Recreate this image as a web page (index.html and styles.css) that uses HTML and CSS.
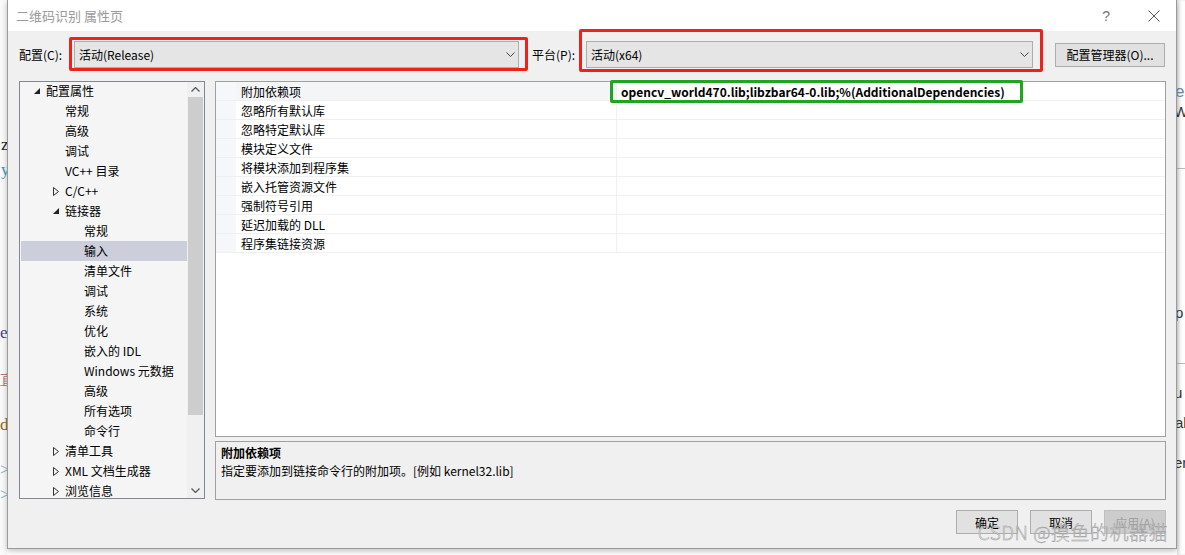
FILE: index.html
```html
<!DOCTYPE html>
<html>
<head>
    <meta charset="UTF-8">
    <link rel="stylesheet" href="styles.css">
</head>
<body>
<div class="screen">
    <div class="bg-left">
        <div class="bg-char c-z">z</div>
        <div class="bg-char c-y">y</div>
        <div class="bg-char c-e">e</div>
        <div class="bg-char c-zh">直</div>
        <div class="bg-char c-d">d</div>
        <div class="bg-char c-gt">&gt;</div>
        <div class="bg-char c-gt2">&gt;</div>
    </div>

    <div class="dialog">
        <div class="titlebar">
            <span class="title">二维码识别 属性页</span>
            <span class="help">?</span>
            <svg class="close" width="12" height="12" viewBox="0 0 12 12">
                <path d="M0.5 0.5 L11.5 11.5 M11.5 0.5 L0.5 11.5" stroke="#555" stroke-width="1" fill="none"/>
            </svg>
        </div>

        <div class="content">
            <div class="config-row">
                <label class="cfg-label">配置(C):</label>
                <div class="combo combo-config">
                    <span>活动(Release)</span>
                    <svg width="9" height="5" viewBox="0 0 9 5"><path d="M0.5 0.5 L4.5 4.5 L8.5 0.5" stroke="#444" fill="none"/></svg>
                    <div class="mark-red mark-config"></div>
                </div>
                <label class="cfg-label plat-label">平台(P):</label>
                <div class="combo combo-platform">
                    <span>活动(x64)</span>
                    <svg width="9" height="5" viewBox="0 0 9 5"><path d="M0.5 0.5 L4.5 4.5 L8.5 0.5" stroke="#444" fill="none"/></svg>
                    <div class="mark-red mark-platform"></div>
                </div>
                <button class="btn btn-manager">配置管理器(O)...</button>
            </div>

            <div class="main">
                <div class="tree">
                    <div class="tree-list">
                        <div class="node lvl0"><span class="tog"><svg width="6" height="6" viewBox="0 0 6 6"><polygon points="6,0 6,6 0,6" fill="#222"/></svg></span>配置属性</div>
                        <div class="node lvl1"><span class="tog"></span>常规</div>
                        <div class="node lvl1"><span class="tog"></span>高级</div>
                        <div class="node lvl1"><span class="tog"></span>调试</div>
                        <div class="node lvl1"><span class="tog"></span>VC++ 目录</div>
                        <div class="node lvl1"><span class="tog"><svg width="6" height="9" viewBox="0 0 6 9"><polygon points="0.5,0.5 5.5,4.5 0.5,8.5" fill="none" stroke="#333"/></svg></span>C/C++</div>
                        <div class="node lvl1"><span class="tog"><svg width="6" height="6" viewBox="0 0 6 6"><polygon points="6,0 6,6 0,6" fill="#222"/></svg></span>链接器</div>
                        <div class="node lvl2"><span class="tog"></span>常规</div>
                        <div class="node lvl2 selected"><span class="tog"></span>输入</div>
                        <div class="node lvl2"><span class="tog"></span>清单文件</div>
                        <div class="node lvl2"><span class="tog"></span>调试</div>
                        <div class="node lvl2"><span class="tog"></span>系统</div>
                        <div class="node lvl2"><span class="tog"></span>优化</div>
                        <div class="node lvl2"><span class="tog"></span>嵌入的 IDL</div>
                        <div class="node lvl2"><span class="tog"></span>Windows 元数据</div>
                        <div class="node lvl2"><span class="tog"></span>高级</div>
                        <div class="node lvl2"><span class="tog"></span>所有选项</div>
                        <div class="node lvl2"><span class="tog"></span>命令行</div>
                        <div class="node lvl1"><span class="tog"><svg width="6" height="9" viewBox="0 0 6 9"><polygon points="0.5,0.5 5.5,4.5 0.5,8.5" fill="none" stroke="#333"/></svg></span>清单工具</div>
                        <div class="node lvl1"><span class="tog"><svg width="6" height="9" viewBox="0 0 6 9"><polygon points="0.5,0.5 5.5,4.5 0.5,8.5" fill="none" stroke="#333"/></svg></span>XML 文档生成器</div>
                        <div class="node lvl1"><span class="tog"><svg width="6" height="9" viewBox="0 0 6 9"><polygon points="0.5,0.5 5.5,4.5 0.5,8.5" fill="none" stroke="#333"/></svg></span>浏览信息</div>
                    </div>
                    <div class="scrollbar">
                        <div class="sb-arrow">
                            <svg width="9" height="5" viewBox="0 0 9 5"><path d="M0.5 4.5 L4.5 0.5 L8.5 4.5" stroke="#555" stroke-width="1.2" fill="none"/></svg>
                        </div>
                        <div class="sb-thumb"></div>
                        <div class="sb-track"></div>
                        <div class="sb-arrow">
                            <svg width="9" height="5" viewBox="0 0 9 5"><path d="M0.5 0.5 L4.5 4.5 L8.5 0.5" stroke="#555" stroke-width="1.2" fill="none"/></svg>
                        </div>
                    </div>
                </div>

                <div class="right-pane">
                    <div class="grid">
                        <div class="row first">
                            <div class="gutter"></div>
                            <div class="name">附加依赖项</div>
                            <div class="value">
                                <span class="value-text">opencv_world470.lib;libzbar64-0.lib;%(AdditionalDependencies)</span>
                                <div class="mark-green"></div>
                            </div>
                        </div>
                        <div class="row"><div class="gutter"></div><div class="name">忽略所有默认库</div><div class="value"></div></div>
                        <div class="row"><div class="gutter"></div><div class="name">忽略特定默认库</div><div class="value"></div></div>
                        <div class="row"><div class="gutter"></div><div class="name">模块定义文件</div><div class="value"></div></div>
                        <div class="row"><div class="gutter"></div><div class="name">将模块添加到程序集</div><div class="value"></div></div>
                        <div class="row"><div class="gutter"></div><div class="name">嵌入托管资源文件</div><div class="value"></div></div>
                        <div class="row"><div class="gutter"></div><div class="name">强制符号引用</div><div class="value"></div></div>
                        <div class="row"><div class="gutter"></div><div class="name">延迟加载的 DLL</div><div class="value"></div></div>
                        <div class="row"><div class="gutter"></div><div class="name">程序集链接资源</div><div class="value"></div></div>
                    </div>
                    <div class="desc">
                        <div class="desc-title">附加依赖项</div>
                        <div class="desc-text">指定要添加到链接命令行的附加项。[例如 kernel32.lib]</div>
                    </div>
                </div>
            </div>

            <div class="buttons">
                <button class="btn btn-dlg">确定</button>
                <button class="btn btn-dlg">取消</button>
                <button class="btn btn-dlg disabled">应用(A)</button>
            </div>
        </div>

        <div class="watermark">CSDN @摸鱼的机器猫</div>
    </div>

    <div class="bg-right">
        <div class="bg-char r-e">e</div>
        <div class="bg-char r-w">W</div>
        <div class="r-line r-line1"></div>
        <div class="bg-char r-p">p</div>
        <div class="r-line r-line2"></div>
        <div class="bg-char r-u">u</div>
        <div class="bg-char r-al">al</div>
        <div class="bg-char r-er">er</div>
    </div>
</div>
</body>
</html>
```

FILE: styles.css
```css
html, body {
    margin: 0;
    padding: 0;
}

body {
    font-family: "Noto Sans CJK SC", "Noto Sans", sans-serif;
    font-size: 12px;
    color: #000;
    background: #fff;
}

.screen {
    display: flex;
    width: 1185px;
    height: 555px;
    overflow: hidden;
    background: #fff;
}

/* background window bits */
.bg-left {
    width: 7px;
    flex: none;
    overflow: hidden;
    background: #fafafa;
    font-family: "Liberation Serif", serif;
}

.bg-right {
    width: 8px;
    flex: none;
    overflow: hidden;
    background: #fff;
    font-family: "Liberation Sans", sans-serif;
    box-shadow: inset 2px 0 3px rgba(0,0,0,0.12);
}

.bg-char {
    height: 20px;
    line-height: 20px;
    font-size: 17px;
    white-space: nowrap;
}

.c-z { margin-top: 135px; color: #222; text-indent: 1px; }
.c-y { margin-top: 5px; color: #3c9cc4; text-indent: 1px; }
.c-e { margin-top: 143px; color: #3b4388; text-indent: 0; }
.c-zh { margin-top: 27px; color: #b47878; text-indent: 0; font-size: 15px; }
.c-d { margin-top: 25px; color: #8a6a30; text-indent: 0; }
.c-gt { margin-top: 25px; color: #7fb0c8; text-indent: 0; }
.c-gt2 { margin-top: 5px; color: #7fb0c8; text-indent: 0; }

.r-e { margin-top: 82px; color: #6b8aa8; text-indent: -2px; }
.r-w { margin-top: 0; color: #333; text-indent: -3px; font-size: 15px; }
.r-line { height: 1px; background: #bbb; }
.r-line1 { margin-top: 46px; }
.r-p { margin-top: 134px; color: #333; text-indent: -2px; font-size: 15px; }
.r-line2 { margin-top: 40px; }
.r-u { margin-top: 19px; color: #333; text-indent: -3px; font-size: 15px; }
.r-al { margin-top: 10px; color: #333; text-indent: -2px; font-size: 15px; }
.r-er { margin-top: 20px; color: #333; text-indent: -3px; font-size: 15px; }

/* dialog */
.dialog {
    position: relative;
    width: 1170px;
    height: 549px;
    flex: none;
    box-sizing: border-box;
    border-left: 1px solid #9a9a9a;
    border-right: 1px solid #9a9a9a;
    border-bottom: 1px solid #9a9a9a;
    background: #f0f0f0;
    box-shadow: 0 2px 6px rgba(0,0,0,0.25);
    display: flex;
    flex-direction: column;
}

.titlebar {
    height: 31px;
    background: #fff;
    display: flex;
    align-items: center;
    padding-left: 8px;
    flex: none;
}

.title {
    font-size: 13px;
    color: #9a9a9a;
    flex: 1;
}

.help {
    font-family: "Liberation Sans", sans-serif;
    font-size: 14px;
    color: #777;
    margin-right: 38px;
}

.close {
    margin-right: 16px;
}

.content {
    flex: 1;
    padding: 10px 10px 0 11px;
    display: flex;
    flex-direction: column;
}

.config-row {
    display: flex;
    align-items: center;
    height: 27px;
}

.cfg-label {
    width: 55px;
    flex: none;
    white-space: nowrap;
}

.plat-label {
    margin-left: 13px;
    width: 54px;
}

.combo {
    position: relative;
    box-sizing: border-box;
    height: 27px;
    border: 1px solid #adadad;
    background: #e5e5e5;
    display: flex;
    align-items: center;
    padding: 0 3px 0 4px;
    flex: none;
}

.combo span {
    flex: 1;
}

.combo-config { width: 445px; }
.combo-platform { width: 447px; }

.mark-red {
    position: absolute;
    border: 3px solid #f0201a;
    border-radius: 2px;
}

.mark-config {
    left: -6px;
    top: -5px;
    width: 453px;
    height: 28px;
}

.mark-platform {
    left: -8px;
    top: -13px;
    width: 458px;
    height: 37px;
}

.btn {
    font-family: inherit;
    font-size: 12px;
    color: #000;
    box-sizing: border-box;
    border: 1px solid #adadad;
    background: #e1e1e1;
    padding: 0;
    height: 24px;
}

.btn-manager {
    width: 110px;
    margin-left: 22px;
}

/* main area */
.main {
    display: flex;
    margin-top: 13px;
    height: 419px;
}

.tree {
    width: 186px;
    height: 418px;
    box-sizing: border-box;
    border: 1px solid #828790;
    background: #f5f5f5;
    display: flex;
    flex: none;
    overflow: hidden;
}

.tree-list {
    flex: 1;
    padding-left: 1px;
    margin-top: -1px;
}

.node {
    height: 20px;
    line-height: 20px;
    display: flex;
    align-items: center;
    white-space: nowrap;
}

.node.selected {
    background: #cccedb;
}

.lvl0 { padding-left: 11px; }
.lvl1 { padding-left: 30px; }
.lvl2 { padding-left: 49px; }

.tog {
    width: 14px;
    flex: none;
    display: flex;
    align-items: center;
    padding-left: 2px;
    box-sizing: border-box;
}

.scrollbar {
    width: 17px;
    flex: none;
    background: #f0f0f0;
    display: flex;
    flex-direction: column;
}

.sb-arrow {
    height: 15px;
    display: flex;
    align-items: center;
    justify-content: center;
}

.sb-thumb {
    height: 318px;
    margin: 0 1px;
    background: #cdcdcd;
}

.sb-track {
    flex: 1;
}

.right-pane {
    margin-left: 10px;
    width: 951px;
    display: flex;
    flex-direction: column;
}

.grid {
    height: 357px;
    box-sizing: border-box;
    border: 1px solid #a0a0a0;
    background: #fff;
}

.row {
    display: flex;
    height: 19px;
    line-height: 19px;
    box-sizing: border-box;
    border-bottom: 1px solid #f0f0f0;
}

.gutter {
    width: 20px;
    flex: none;
    background: #f5f7fb;
}

.name {
    width: 375px;
    flex: none;
    padding-left: 5px;
    border-right: 1px solid #f0f0f0;
    white-space: nowrap;
}

.row.first .name {
    background: #f4f5f7;
}

.value {
    position: relative;
    flex: 1;
    padding-left: 4px;
    white-space: nowrap;
}

.value-text {
    font-weight: bold;
}

.mark-green {
    position: absolute;
    left: -7px;
    top: -2px;
    width: 407px;
    height: 17px;
    border: 3px solid #1fa51f;
    border-radius: 2px;
}

.desc {
    margin-top: 4px;
    height: 59px;
    box-sizing: border-box;
    border: 1px solid #a0a0a0;
    background: #f0f0f0;
    padding: 2px 5px;
    line-height: 18px;
}

.desc-title {
    font-weight: bold;
}

/* dialog buttons */
.buttons {
    display: flex;
    justify-content: flex-end;
    gap: 12px;
    margin-top: 10px;
}

.btn-dlg {
    width: 62px;
}

.btn-dlg.disabled {
    background: #cccccc;
    border-color: #bfbfbf;
    color: #a0a0a0;
}

.watermark {
    position: absolute;
    right: 8px;
    bottom: 3px;
    font-size: 19px;
    font-weight: 300;
    letter-spacing: 0.5px;
    color: rgba(255,255,255,0.55);
    -webkit-text-stroke: 0.5px #9a9a9a;
    white-space: nowrap;
}
```
